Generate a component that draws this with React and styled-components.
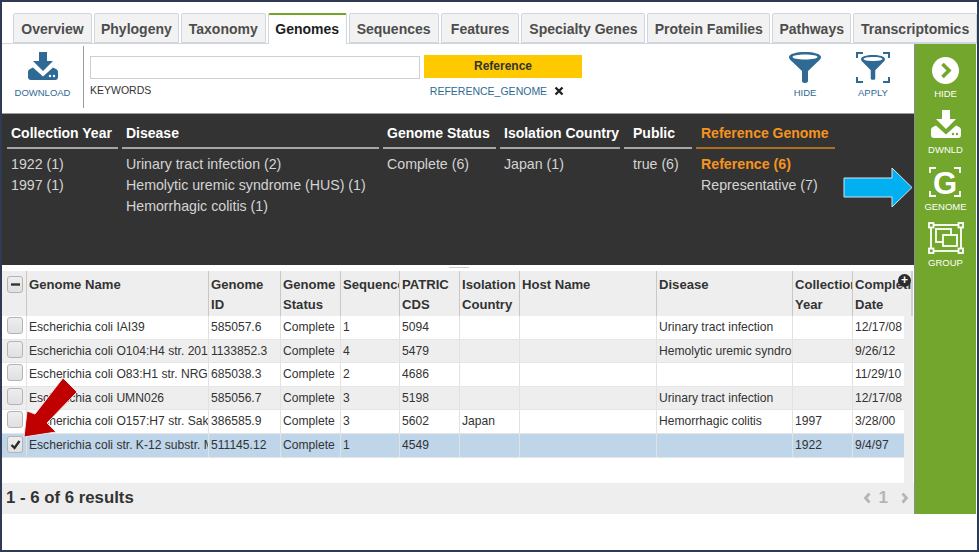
import styled, { createGlobalStyle } from "styled-components";

const GlobalStyle = createGlobalStyle`
  html, body { margin: 0; padding: 0; background: #2f3b52; }
  body { font-family: "Liberation Sans", Arial, sans-serif; }
`;

const Page = styled.div`
  position: relative;
  box-sizing: border-box;
  width: 975px;
  height: 548px;
  margin: 2px;
  padding-top: 11px;
  background: #fff;
  overflow: hidden;
`;

const TabBar = styled.div`
  display: flex;
  gap: 2px;
  height: 31px;
  padding-left: 11px;
  border-bottom: 1px solid #cfd6de;
  box-sizing: border-box;
`;

const Tab = styled.div`
  box-sizing: border-box;
  width: ${(p) => p.$w}px;
  height: ${(p) => (p.$active ? 31 : 30)}px;
  padding-top: ${(p) => (p.$active ? 6 : 7)}px;
  text-align: center;
  font-size: 14px;
  font-weight: 700;
  color: ${(p) => (p.$active ? "#1d1d1d" : "#4d4d4d")};
  background: ${(p) => (p.$active ? "#fff" : "#f2f2f2")};
  border: 1px solid #cfd6de;
  border-bottom: ${(p) => (p.$active ? "none" : "1px solid #cfd6de")};
  border-top: ${(p) => (p.$active ? "2px solid #73a62c" : "1px solid #cfd6de")};
  border-radius: 2px 2px 0 0;
`;

const Body = styled.div`
  display: flex;
  align-items: flex-start;
`;

const Main = styled.div`
  width: 912px;
`;

const Toolbar = styled.div`
  display: flex;
  height: 69px;
  box-sizing: border-box;
`;

const ToolButton = styled.div`
  display: flex;
  flex-direction: column;
  align-items: center;
  width: ${(p) => p.$w}px;
  margin-left: ${(p) => p.$ml || 0}px;
  padding-top: 8px;
  font-size: 9.5px;
  color: #2f6a94;
  box-sizing: border-box;
  svg { display: block; margin-bottom: ${(p) => p.$gap || 5}px; }
`;

const Divider = styled.div`
  width: 1px;
  height: 62px;
  margin: 2px 6px 0 0;
  background: #9a9a9a;
`;

const SearchBox = styled.div`
  width: 330px;
  padding-top: 12px;
  font-size: 10.5px;
  color: #333;
`;

const SearchInput = styled.div`
  box-sizing: border-box;
  height: 23px;
  margin-bottom: 5px;
  border: 1px solid #c9d0d8;
`;

const RefFilter = styled.div`
  width: 158px;
  margin-left: 4px;
  padding-top: 11px;
  text-align: center;
`;

const RefButton = styled.div`
  height: 23px;
  line-height: 23px;
  background: #ffc900;
  font-size: 12px;
  font-weight: 700;
  color: #333;
`;

const RefValue = styled.div`
  margin-top: 7px;
  padding-right: 12px;
  font-size: 10.5px;
  color: #2f6a94;
  display: flex;
  justify-content: center;
  align-items: center;
  gap: 7px;
  svg { width: 10px; height: 10px; }
`;

const FilterPanel = styled.div`
  display: flex;
  gap: 4px;
  height: 152px;
  box-sizing: border-box;
  padding: 10px 0 0 5px;
  background: #333;
  border-top: 1px solid #9b9b9b;
`;

const FilterCol = styled.div`
  width: ${(p) => p.$w}px;
`;

const FilterHead = styled.div`
  height: 25px;
  box-sizing: border-box;
  padding-left: ${(p) => p.$pad}px;
  font-size: 14px;
  line-height: 19px;
  font-weight: 700;
  white-space: nowrap;
  color: ${(p) => (p.$on ? "#f7931e" : "#fff")};
  border-bottom: 2px solid ${(p) => (p.$on ? "#a8701f" : "#a5a5a5")};
`;

const FilterItem = styled.div`
  padding-left: ${(p) => p.$pad}px;
  font-size: 14.2px;
  line-height: 21px;
  white-space: nowrap;
  font-weight: ${(p) => (p.$on ? 700 : 400)};
  color: ${(p) => (p.$on ? "#f7931e" : "#d4d4d4")};
`;

const FilterList = styled.div`
  padding-top: 5px;
`;

const Splitter = styled.div`
  position: relative;
  height: 6px;
  background: #fff;
  &::after {
    content: "";
    position: absolute;
    left: 447px;
    top: 2px;
    width: 20px;
    height: 1px;
    background: #c5cfd8;
  }
`;

const cols = "24px 182px 72px 60px 59px 60px 60px 137px 136px 60px";

const HeaderRow = styled.div`
  position: relative;
  box-sizing: border-box;
  display: grid;
  grid-template-columns: ${cols} 1fr;
  height: 45px;
  background: #eee;
  border-right: 2px solid #d0d0d0;
  margin-right: 1px;
`;

const HeadCell = styled.div`
  box-sizing: border-box;
  padding: 4px 0 0 2px;
  overflow: hidden;
  font-size: 13.1px;
  line-height: 20px;
  font-weight: 700;
  color: #333;
  border-left: 1px solid #c8c8c8;
  white-space: pre-line;
  &:first-child { border-left: none; padding: 4px 0 0 5px; }
`;

const AddColumn = styled.span`
  position: absolute;
  right: 0;
  top: 3px;
  width: 13px;
  height: 13px;
  border-radius: 50%;
  background: #2c2c2c;
  color: #fff;
  font-size: 12px;
  line-height: 13px;
  font-weight: 700;
  text-align: center;
`;

const RowsArea = styled.div`
  height: 167px;
  background: #eee;
  margin-right: 1px;
`;

const RowList = styled.div`
  width: 902px;
  height: 100%;
  background: #fff;
`;

const Row = styled.div`
  display: grid;
  grid-template-columns: ${cols} 52px;
  height: 23.6px;
  background: ${(p) => (p.$sel ? "#bed5ea" : p.$alt ? "#eee" : "#fff")};
  border-bottom: 1px solid #e6e6e6;
  box-sizing: border-box;
`;

const Cell = styled.div`
  box-sizing: border-box;
  padding-left: 2px;
  overflow: hidden;
  white-space: nowrap;
  font-size: 12.1px;
  line-height: 23px;
  color: #333;
  border-left: 1px solid #e2e2e2;
  &:first-child { border-left: none; padding-left: 5px; }
`;

const CheckBox = styled.div`
  display: flex;
  align-items: center;
  justify-content: center;
  box-sizing: border-box;
  width: 16px;
  height: 17px;
  margin-top: ${(p) => (p.$sel ? 2 : 1)}px;
  background: linear-gradient(#eee, #e0e0e0);
  border: 1px solid #b4b4b4;
  border-radius: 3px;
  svg { width: 13px; height: 13px; }
`;

const Footer = styled.div`
  display: flex;
  justify-content: space-between;
  align-items: center;
  height: 31px;
  padding: 0 5px 2px 4px;
  box-sizing: border-box;
  background: #eee;
  color: #333;
  font-size: 16.8px;
  font-weight: 700;
`;

const Pager = styled.div`
  display: flex;
  align-items: center;
  gap: 8px;
  color: #b5b5b5;
  font-size: 17px;
  svg { width: 8px; height: 12px; }
  svg:last-child { margin-left: 5px; }
`;

const Sidebar = styled.div`
  box-sizing: border-box;
  width: 62px;
  height: 470px;
  padding-top: 13px;
  background: #73a62c;
  border-left: 1px solid #8c8c8c;
  display: flex;
  flex-direction: column;
  align-items: center;
`;

const SideButton = styled.div`
  display: flex;
  flex-direction: column;
  align-items: center;
  height: ${(p) => p.$h}px;
  font-size: 9.5px;
  color: #fff;
  svg { display: block; margin-bottom: ${(p) => p.$gap}px; }
`;

const BlueArrow = styled.svg`
  position: absolute;
  left: 841px;
  top: 164px;
`;

const RedArrow = styled.svg`
  position: absolute;
  left: 12px;
  top: 365px;
`;

const DownloadIcon = ({ color, cut }) => (
  <svg width="30" height="28" viewBox="0 0 30 28">
    <path d="M11 0h8v9h6l-10 10L5 9h6z" fill={color} />
    <path d="M5 15.500l-3 1.500c-1.200.7-2 1.600-2 3v5c0 1.700 1 3 3 3h24c2 0 3-1.300 3-3v-5c0-1.400-.8-2.300-2-3l-3-1.500-10 9z" fill={color} />
    <circle cx="22" cy="24" r="1.200" fill={cut} />
    <circle cx="26" cy="24" r="1.200" fill={cut} />
  </svg>
);

const Funnel = () => (
  <path
    fill="#2f6a94"
    fillRule="evenodd"
    d="M16 0c9 0 16 2 16 5 0 1.500-.8 2.800-2.500 4L19 19v10c0 1.200-1 2-3 2s-3-.8-3-2V19L2.500 9C.8 7.800 0 6.500 0 5c0-3 7-5 16-5zM16 2.500C9 2.500 3.500 3.500 3.500 5S9 7.500 16 7.500 28.500 6.500 28.500 5 23 2.500 16 2.500z"
  />
);

const tabs = [
  ["Overview", 79], ["Phylogeny", 85], ["Taxonomy", 85], ["Genomes", 79, true],
  ["Sequences", 90], ["Features", 79], ["Specialty Genes", 124], ["Protein Families", 123],
  ["Pathways", 79], ["Transcriptomics", 124],
];

const facets = [
  { w: 111, pad: 4, title: "Collection Year", items: ["1922 (1)", "1997 (1)"] },
  { w: 257, pad: 4, title: "Disease", items: ["Urinary tract infection (2)", "Hemolytic uremic syndrome (HUS) (1)", "Hemorrhagic colitis (1)"] },
  { w: 113, pad: 4, title: "Genome Status", items: ["Complete (6)"] },
  { w: 120, pad: 4, title: "Isolation Country", items: ["Japan (1)"] },
  { w: 68, pad: 9, title: "Public", items: ["true (6)"] },
  { w: 139, pad: 5, title: "Reference Genome", on: true, items: ["Reference (6)", "Representative (7)"] },
];

const heads = ["Genome Name", "Genome\nID", "Genome\nStatus", "Sequences", "PATRIC\nCDS", "Isolation\nCountry", "Host Name", "Disease", "Collection\nYear", "Completion\nDate"];

const genomes = [
  ["Escherichia coli IAI39", "585057.6", "Complete", "1", "5094", "", "", "Urinary tract infection", "", "12/17/08"],
  ["Escherichia coli O104:H4 str. 2011C-3493", "1133852.3", "Complete", "4", "5479", "", "", "Hemolytic uremic syndrome", "", "9/26/12"],
  ["Escherichia coli O83:H1 str. NRG 857C", "685038.3", "Complete", "2", "4686", "", "", "", "", "11/29/10"],
  ["Escherichia coli UMN026", "585056.7", "Complete", "3", "5198", "", "", "Urinary tract infection", "", "12/17/08"],
  ["Escherichia coli O157:H7 str. Sakai", "386585.9", "Complete", "3", "5602", "Japan", "", "Hemorrhagic colitis", "1997", "3/28/00"],
  ["Escherichia coli str. K-12 substr. MG1655", "511145.12", "Complete", "1", "4549", "", "", "", "1922", "9/4/97"],
];

const App = () => {
  return (
    <Page>
      <GlobalStyle />
      <TabBar>
        {tabs.map(([name, w, active]) => (
          <Tab key={name} $w={w} $active={active}>{name}</Tab>
        ))}
      </TabBar>
      <Body>
        <Main>
          <Toolbar>
            <ToolButton $w={81} $gap={7}>
              <DownloadIcon color="#2f6a94" cut="#fff" />
              DOWNLOAD
            </ToolButton>
            <Divider />
            <SearchBox>
              <SearchInput />
              KEYWORDS
            </SearchBox>
            <RefFilter>
              <RefButton>Reference</RefButton>
              <RefValue>
                REFERENCE_GENOME
                <svg viewBox="0 0 10 10"><path d="M1.500 1.500l7 7M8.500 1.500l-7 7" stroke="#222" strokeWidth="2.400" /></svg>
              </RefValue>
            </RefFilter>
            <ToolButton $w={60} $ml={193} $gap={4}>
              <svg width="32" height="31" viewBox="0 0 32 31"><Funnel /></svg>
              HIDE
            </ToolButton>
            <ToolButton $w={60} $ml={8} $gap={4}>
              <svg width="34" height="31" viewBox="0 0 34 31">
                <path d="M1 6V1h6M27 1h6v5M1 25v5h6M33 25v5h-6" fill="none" stroke="#2f6a94" strokeWidth="2" />
                <g transform="translate(5 3) scale(.75 .8)"><Funnel /></g>
              </svg>
              APPLY
            </ToolButton>
          </Toolbar>
          <FilterPanel>
            {facets.map((f) => (
              <FilterCol key={f.title} $w={f.w}>
                <FilterHead $on={f.on} $pad={f.pad}>{f.title}</FilterHead>
                <FilterList>
                  {f.items.map((item, i) => (
                    <FilterItem key={item} $pad={f.pad} $on={f.on && i === 0}>{item}</FilterItem>
                  ))}
                </FilterList>
              </FilterCol>
            ))}
          </FilterPanel>
          <Splitter />
          <HeaderRow>
            <HeadCell>
              <CheckBox><svg viewBox="0 0 13 13"><path d="M2 6.500h9" stroke="#333" strokeWidth="2.400" /></svg></CheckBox>
            </HeadCell>
            {heads.map((h) => <HeadCell key={h}>{h}</HeadCell>)}
            <AddColumn>+</AddColumn>
          </HeaderRow>
          <RowsArea>
            <RowList>
              {genomes.map((g, i) => (
                <Row key={g[1]} $alt={i % 2 === 1} $sel={i === 5}>
                  <Cell>
                    <CheckBox $sel={i === 5}>
                      {i === 5 && <svg viewBox="0 0 13 13"><path d="M2.500 7l3 3L10.500 3" fill="none" stroke="#2a2a2a" strokeWidth="2.400" /></svg>}
                    </CheckBox>
                  </Cell>
                  {g.map((v, c) => <Cell key={c}>{v}</Cell>)}
                </Row>
              ))}
            </RowList>
          </RowsArea>
          <Footer>
            1 - 6 of 6 results
            <Pager>
              <svg viewBox="0 0 8 12"><path d="M6.500 1.500L2.500 6l4 4.500" fill="none" stroke="#b5b5b5" strokeWidth="2.800" /></svg>
              1
              <svg viewBox="0 0 8 12"><path d="M1.500 1.500L5.500 6l-4 4.500" fill="none" stroke="#b5b5b5" strokeWidth="2.800" /></svg>
            </Pager>
          </Footer>
        </Main>
        <Sidebar>
          <SideButton $h={53} $gap={4}>
            <svg width="27" height="27" viewBox="0 0 27 27">
              <circle cx="13.500" cy="13.500" r="13.500" fill="#fff" />
              <path d="M10.500 7l6.500 6.500L10.500 20" fill="none" stroke="#73a62c" strokeWidth="3.600" />
            </svg>
            HIDE
          </SideButton>
          <SideButton $h={56} $gap={6}>
            <DownloadIcon color="#fff" cut="#73a62c" />
            DWNLD
          </SideButton>
          <SideButton $h={56} $gap={3}>
            <svg width="34" height="32" viewBox="0 0 34 32">
              <path d="M2 7V2h6M26 2h6v5M2 25v5h6M32 25v5h-6" fill="none" stroke="#fff" strokeWidth="1.800" />
              <text x="17" y="27.500" textAnchor="middle" fontSize="31" fontWeight="700" fill="#fff" fontFamily="Liberation Sans">G</text>
            </svg>
            GENOME
          </SideButton>
          <SideButton $h={56} $gap={3}>
            <svg width="36" height="32" viewBox="0 0 36 32" fill="none" stroke="#fff">
              <rect x="3" y="3" width="30" height="26" strokeWidth="1.800" />
              <g fill="#73a62c" strokeWidth="1.800">
                <rect x="1" y="1" width="4.500" height="4.500" />
                <rect x="30.500" y="1" width="4.500" height="4.500" />
                <rect x="1" y="26.500" width="4.500" height="4.500" />
                <rect x="30.500" y="26.500" width="4.500" height="4.500" />
                <rect x="8" y="7" width="15" height="13" />
                <rect x="15" y="13" width="14" height="11" />
              </g>
            </svg>
            GROUP
          </SideButton>
        </Sidebar>
      </Body>
      <BlueArrow width="72" height="44" viewBox="0 0 72 44">
        <path d="M1 12H49V2L69 21.500 49 41V31H1z" fill="#00b0f0" stroke="#cfe6f2" strokeWidth="1" />
      </BlueArrow>
      <RedArrow width="70" height="76" viewBox="0 0 70 76">
        <path d="M49 11L63 25 33 56 42 65 10 70 13 44 21 47z" fill="#c00000" stroke="#e8e8e8" strokeWidth="1" />
      </RedArrow>
    </Page>
  );
};

export default App;
